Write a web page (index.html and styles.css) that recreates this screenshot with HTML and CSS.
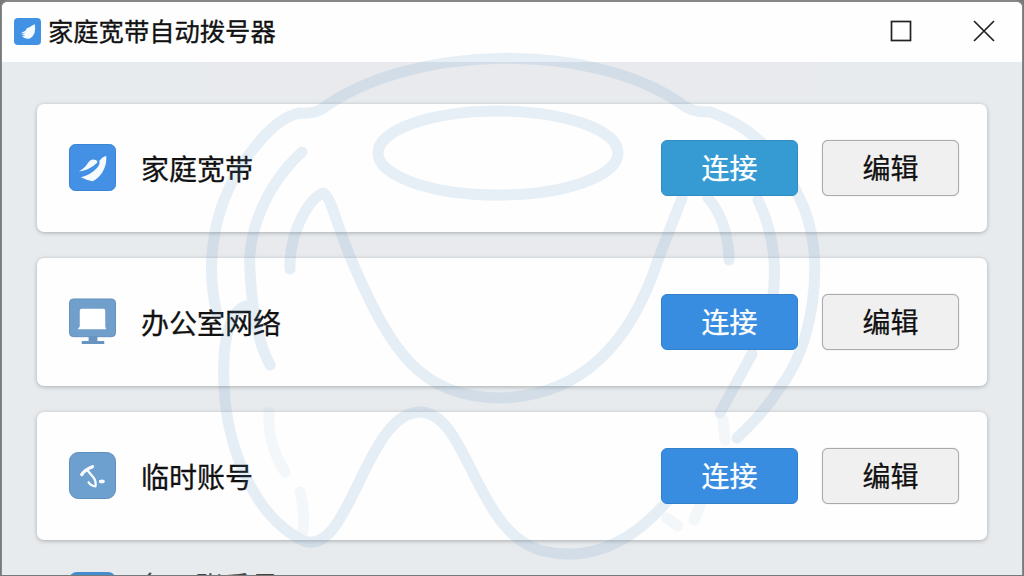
FILE: index.html
```html
<!DOCTYPE html>
<html lang="zh-CN">
<head>
<meta charset="utf-8">
<title>家庭宽带自动拨号器</title>
<link rel="stylesheet" href="styles.css">
</head>
<body>
<div class="window">
  <header class="titlebar">
    <svg class="app-icon" viewBox="0 0 48 48"><rect width="48" height="48" rx="7" fill="#4192e4"/><path d="M12 27L21 22Q22 17 27 17Q32 12 37 11Q40 29 29 36Q20 39 14 32L20 31L13 29L21 26Z" fill="#f5fbff"/></svg>
    <h1 class="title">家庭宽带自动拨号器</h1>
    <div class="controls">
      <button class="control" aria-label="最大化"><svg viewBox="0 0 22 22"><rect x="1.5" y="1.5" width="19" height="19"/></svg></button>
      <button class="control" aria-label="关闭"><svg viewBox="0 0 22 22"><path d="M1 1L21 21M21 1L1 21"/></svg></button>
    </div>
  </header>
  <main class="list">
    <section class="card">
      <svg class="icon" viewBox="0 0 48 48"><rect x=".5" y=".5" width="47" height="47" rx="6" fill="#4390e5" stroke="#3582d2"/><path d="M10 28Q16 25 19 20Q22 15 26 16Q29 16 29 19Q21 27 10 28Z" fill="#f5faff"/><path d="M12 34Q23 31 28 25Q32 21 31 17Q34 13 38 12Q39 21 34 29Q29 36 24 38Q18 37 12 34Z" fill="#f5faff"/></svg>
      <span class="name">家庭宽带</span>
      <button class="button connect teal">连接</button>
      <button class="button edit">编辑</button>
    </section>
    <section class="card">
      <svg class="icon" viewBox="0 0 48 48"><rect x=".5" y="1" width="47" height="38.5" rx="4" fill="#719fcc" stroke="#638fbd"/><path d="M20 39H29V44H36V47H13V44H20Z" fill="#6794c1"/><path d="M13 11H35Q37 11 37 13V29L38 32H9L11 29V13Q11 11 13 11Z" fill="#fff"/></svg>
      <span class="name">办公室网络</span>
      <button class="button connect">连接</button>
      <button class="button edit">编辑</button>
    </section>
    <section class="card">
      <svg class="icon" viewBox="0 0 48 48"><rect x=".5" y=".5" width="47" height="47" rx="9" fill="#6d9fcf" stroke="#5b8dbc"/><g fill="none" stroke="#f7fbff" stroke-linecap="round" stroke-linejoin="round"><path d="M13 23Q16 18 24 15" stroke-width="3.4"/><path d="M19 19L25 26Q28 30 27 35Q23 35 20 31" stroke-width="2.4"/></g><ellipse cx="33.5" cy="30" rx="3" ry="1.9" fill="#f7fbff"/></svg>
      <span class="name">临时账号</span>
      <button class="button connect">连接</button>
      <button class="button edit">编辑</button>
    </section>
    <section class="next-row">
      <span class="next-icon"></span>
      <span class="next-name">备用账番号</span>
    </section>
  </main>
  <svg class="watermark" viewBox="0 0 1024 576" aria-hidden="true">
    <path d="M217 314C204 260 214 200 251 152Q277 117 300 113Q313 114 322 109C410 44 590 41 680 103Q692 113 710 112C754 127 783 158 804 208C825 262 814 344 779 389Q763 414 737 438"/>
    <ellipse cx="498" cy="153" rx="120" ry="42"/>
    <path d="M302 152C264 187 247 235 250 271Q253 333 270 365"/>
    <path d="M290 269C289 236 306 201 323 193C331 195 336 225 354 266C392 353 421 396 498 398C591 397 635 330 658 260L682 198"/>
    <path d="M708 198Q728 221 729 260M758 200Q781 248 772 302M752 354L720 413"/>
    <path d="M246 306C232 310 225 334 224 358C220 435 250 515 304 541C350 557 365 413 420 412C468 412 475 534 543 551C598 564 640 534 670 498"/>
    <path class="faint" d="M269 412Q267 443 285 472M300 492Q306 515 302 535M723 420L725 440M667 518L678 526M694 520L702 500"/>
  </svg>
</div>
</body>
</html>
```
FILE: styles.css
```css
* { box-sizing: border-box; }

body {
  margin: 0;
  height: 576px;
  overflow: hidden;
  background: #77797b;
  color: #111;
  font-family: "Noto Sans CJK SC", sans-serif;
}

.window {
  position: relative;
  display: flex;
  flex-direction: column;
  height: 575px;
  margin: 0 1px;
  border: 1px solid #858789;
  border-top-width: 2px;
  border-bottom: 0;
  border-radius: 7px 7px 0 0;
  background: #e8ebee;
  overflow: hidden;
}

.titlebar {
  display: flex;
  flex: 0 0 60px;
  align-items: center;
  padding: 0 27px 2px 12px;
  background: #fefefe;
}

.app-icon { width: 27px; height: 27px; }

.title {
  margin: 0 0 2px 7px;
  font-size: 25.3px;
  font-weight: 400;
  line-height: 36px;
  -webkit-text-stroke: .3px #111;
}

.controls { display: flex; gap: 61px; margin-left: auto; }

.control {
  width: 22px;
  height: 22px;
  padding: 0;
  border: 0;
  background: none;
}

.control svg {
  display: block;
  width: 22px;
  height: 22px;
  fill: none;
  stroke: #222;
  stroke-width: 1.7;
}

.list {
  display: flex;
  flex-direction: column;
  gap: 26px;
  padding: 42px 35px 0;
}

.card {
  display: flex;
  flex: 0 0 128px;
  align-items: center;
  padding: 0 28px 1px 32px;
  border-radius: 7px;
  background: #fefefe;
  box-shadow: 0 1px 4px #0004;
}

.icon { flex: none; width: 47px; height: 47px; }

.name {
  margin: 1px auto 0 25px;
  font-size: 28px;
  line-height: 40px;
  -webkit-text-stroke: .3px #111;
}

.button {
  position: relative;
  z-index: 2;
  width: 137px;
  height: 56px;
  padding: 0 0 1px;
  border: 1px solid #3380cc;
  border-radius: 6px;
  font: 400 28px/40px "Noto Sans CJK SC", sans-serif;
  -webkit-text-stroke: .25px currentColor;
}

.connect { margin-right: 24px; background: #398de1; color: #fff; }
.teal { border-color: #318cbf; background: #379bd3; }
.edit { border: 1.5px solid #a9abad; background: #f0f0f1; color: #111; box-shadow: 0 0 1px #aaa; }

.next-row {
  display: flex;
  flex: 0 0 48px;
  align-items: flex-start;
  padding: 6px 32px 0;
}

.next-icon { width: 47px; height: 47px; border-radius: 8px; background: #438dcf; }
.next-name { margin: -7px 0 0 23px; color: #444; font-size: 28px; line-height: 40px; }

.watermark {
  position: absolute;
  z-index: 1;
  left: -2px;
  top: -2px;
  width: 1024px;
  height: 576px;
  opacity: .14;
  fill: none;
  stroke: #5790c4;
  stroke-width: 11;
  stroke-linecap: round;
  stroke-linejoin: round;
  pointer-events: none;
}

.faint { opacity: .4; }
```
